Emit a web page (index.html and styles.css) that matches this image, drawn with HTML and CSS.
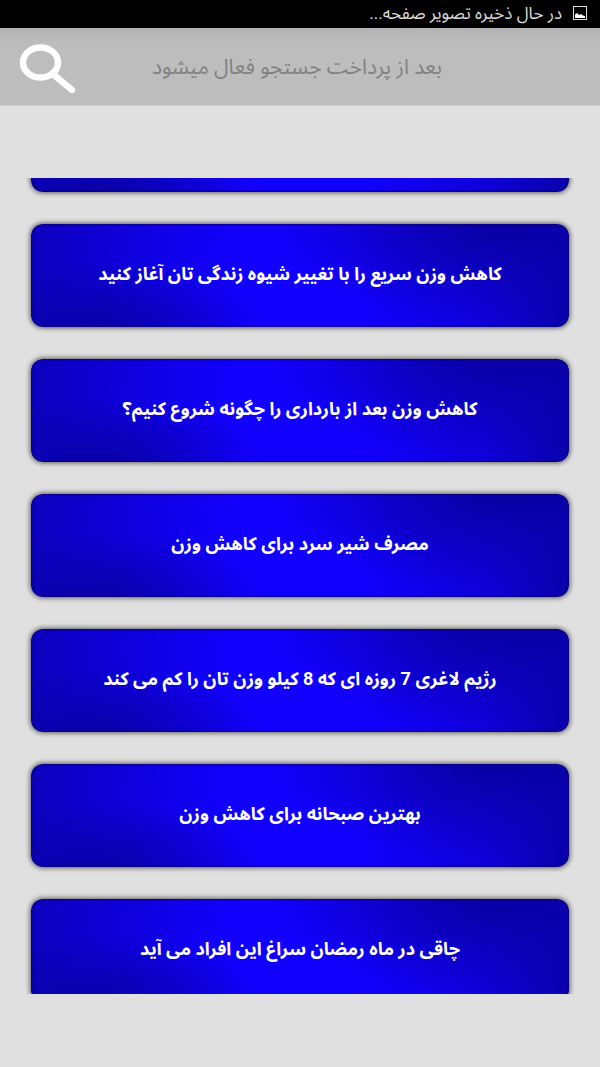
FILE: index.html
```html
<!doctype html>
<html lang="fa" dir="rtl">
  <head>
    <meta charset="UTF-8" />
    <meta name="viewport" content="width=device-width, initial-scale=1.0" />
    <title>کاهش وزن</title>
    <link rel="stylesheet" href="styles.css">
  </head>
  <body>
    <div class="status">
      <svg class="status-icon" viewBox="0 0 14 14" aria-hidden="true">
        <rect x="0.5" y="0.5" width="13" height="13" fill="none" stroke="#ddd" />
        <path d="M2 12V8.500l2-1.500 2 2 2-1 2 1.500 2 .5v2z" fill="#fff" />
      </svg>
      <span>در حال ذخیره تصویر صفحه...</span>
    </div>

    <form class="search">
      <input type="text" aria-label="جستجو" placeholder="بعد از پرداخت جستجو فعال میشود" />
      <button type="button" aria-label="جستجو">
        <svg viewBox="0 0 62 52" fill="none" stroke="#fff" stroke-linecap="round">
          <ellipse cx="24.500" cy="21.500" rx="17.500" ry="15" stroke-width="6.500" />
          <path d="M38 34l18 15" stroke-width="6.500" />
        </svg>
      </button>
    </form>

    <main id="list" class="list">
      <button class="card" type="button" aria-label="مطلب قبلی"></button>
      <button class="card" type="button">کاهش وزن سریع را با تغییر شیوه زندگی تان آغاز کنید</button>
      <button class="card" type="button">کاهش وزن بعد از بارداری را چگونه شروع کنیم؟</button>
      <button class="card" type="button">مصرف شیر سرد برای کاهش وزن</button>
      <button class="card" type="button">رژیم لاغری 7 روزه ای که 8 کیلو وزن تان را کم می کند</button>
      <button class="card" type="button">بهترین صبحانه برای کاهش وزن</button>
      <button class="card" type="button">چاقی در ماه رمضان سراغ این افراد می آید</button>
    </main>

    <script>
      // Start with the first card mostly scrolled away
      document.getElementById('list').scrollTop = 89;
    </script>
  </body>
</html>
```
FILE: styles.css
```css
*,
*::before,
*::after {
  box-sizing: border-box;
}

body {
  display: flex;
  flex-direction: column;
  height: 100vh;
  margin: 0;
  background-color: #e0e0e0;
  font-family: Roboto, 'Noto Sans Arabic', sans-serif;
}

button,
input {
  border: 0;
  font: inherit;
}

.status {
  display: flex;
  flex: none;
  align-items: center;
  height: 28px;
  padding: 0 13px 2px;
  gap: 11px;
  background-color: #000;
  color: #ddd;
  font-size: 17px;
  line-height: 26px;
}

.status-icon {
  width: 14px;
  height: 14px;
}

.search {
  display: flex;
  flex: none;
  align-items: center;
  height: 78px;
  padding: 0 16px;
  border-bottom: 1px solid #cacaca;
  background: linear-gradient(#b4b4b4, #bdbdbd 16px);

  input {
    flex: 1;
    min-width: 0;
    padding: 0 68px 0 0;
    background: none;
    color: #444;
    font-size: 21px;
    line-height: 32px;
    text-align: center;
  }

  input::placeholder {
    color: #818181;
    opacity: 1;
  }

  button {
    flex: none;
    padding: 0;
    background: none;
    cursor: pointer;
  }

  svg {
    display: block;
    width: 62px;
    height: 52px;
  }
}

.list {
  display: flex;
  flex: 1;
  flex-direction: column;
  min-height: 0;
  margin: 72px 25px 73px;
  padding: 0 6px;
  gap: 32px;
  overflow-y: auto;
  scrollbar-width: none;
}

.card {
  flex: none;
  min-height: 103px;
  padding: 0 24px 4px;
  border-radius: 12px;
  background:
    radial-gradient(ellipse 44% 95% at 88% 0, #0a00a8 10%, #0a00a800),
    radial-gradient(ellipse 32% 65% at 12% 100%, #0a00a8, #0a00a800),
    linear-gradient(97deg, #0c00bc, #1000ee 28%, #1200ff 40%, #1200ff 60%, #0f00dc 84%, #0a00aa);
  box-shadow:
    0 0 5px 1px rgb(0 0 0 / 60%),
    inset 0 0 2px 1px rgb(8 0 90 / 70%);
  color: #fff;
  font-size: 18px;
  font-weight: bold;
  line-height: 32px;
  text-align: center;
  cursor: pointer;
}
```
